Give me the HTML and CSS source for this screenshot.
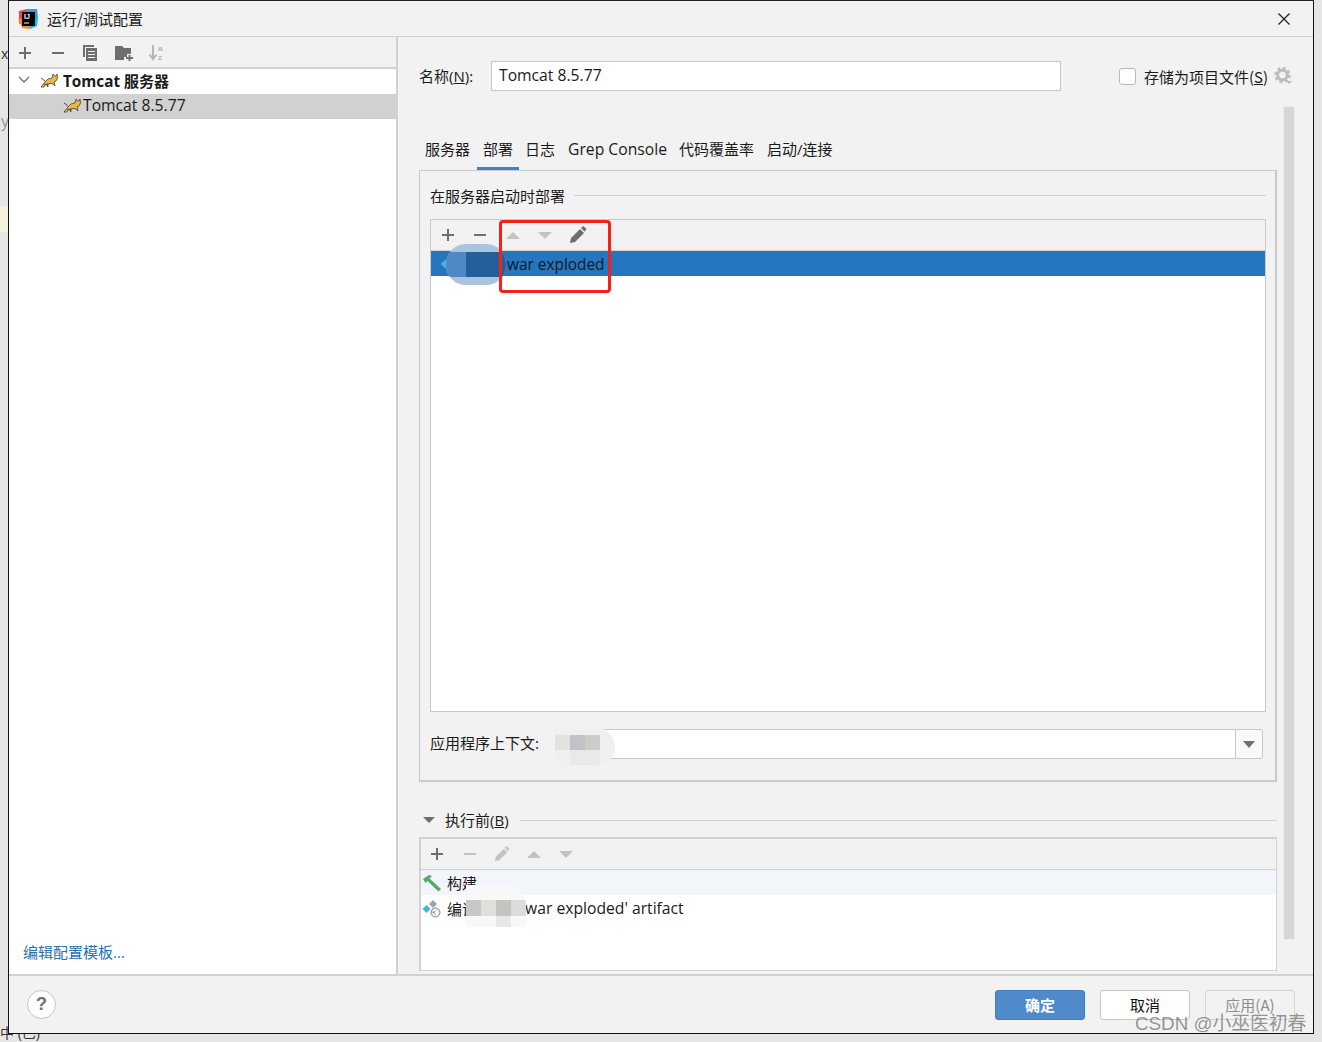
FILE: index.html
```html
<!DOCTYPE html>
<html lang="zh">
<head>
<meta charset="utf-8">
<title>运行/调试配置</title>
<link rel="stylesheet" href="styles.css">
</head>
<body>
<div class="desk">
  <span class="bg-text bg-x">x</span>
  <span class="bg-text bg-y">y</span>
  <span class="bg-note"></span>
  <span class="bg-text bg-zh">中 (已)</span>
  <div class="dialog">
    <header class="titlebar">
      <svg class="logo" width="20" height="20" viewBox="0 0 20 20"><path d="M1 2l8-2 3 3-5 9-6 3z" fill="#fc3a6b"/><path d="M8 0h11l1 10-6 3z" fill="#2f9cf0"/><path d="M0 9l4 10 8 1 1-8z" fill="#fe8a2a"/><path d="M12 20l7-3 1-8-8 2z" fill="#07c3f2"/><rect x="4" y="3" width="13" height="14" fill="#000"/><text x="6" y="10" class="logo-text">IJ</text><rect x="6" y="13.500" width="5" height="1" fill="#fff"/></svg>
      <span class="title">运行/调试配置</span>
      <svg class="close" width="14" height="14" viewBox="0 0 14 14"><path d="M1.500 1.500l11 11M12.500 1.500l-11 11" stroke="#222" stroke-width="1.300" fill="none"/></svg>
    </header>
    <div class="body">
      <aside class="sidebar">
        <div class="side-tools">
          <svg class="ic" viewBox="0 0 16 16"><path d="M8 2v12M2 8h12" stroke="#6e6e6e" stroke-width="2"/></svg>
          <svg class="ic" viewBox="0 0 16 16"><path d="M2 8h12" stroke="#6e6e6e" stroke-width="2"/></svg>
          <svg class="ic ic-copy" viewBox="0 0 16 16"><path d="M1 0h11v2H3v10H1z" fill="#6e6e6e"/><path d="M4 3h11v13H4z" fill="#6e6e6e"/><path d="M6 6h7v1H6zM6 9h7v1H6zM6 12h7v1H6z" fill="#f2f2f2"/></svg>
          <svg class="ic ic-wide" viewBox="0 0 18 16"><path d="M0 1h7l2 2h7v6h-4v3H9v3H0z" fill="#6e6e6e"/><path d="M14.500 10v6M11 13h7" stroke="#6e6e6e" stroke-width="2"/></svg>
          <svg class="ic dim" viewBox="0 0 18 18"><path d="M5 1v13M1.500 10.500L5 15l3.500-4.500" stroke="#b5b5b5" stroke-width="2" fill="none"/><text x="10" y="7" class="az">a</text><text x="10" y="16" class="az">z</text></svg>
        </div>
        <div class="tree-row tree-parent">
          <svg class="chev" width="12" height="8" viewBox="0 0 12 8"><path d="M1 1l5 5 5-5" stroke="#6e6e6e" stroke-width="1.300" fill="none"/></svg>
          <svg class="cat" width="18" height="16" viewBox="0 0 18 16"><use href="#tomcat"/></svg>
          <strong class="tree-strong"><span class="lat">Tomcat</span> 服务器</strong>
        </div>
        <div class="tree-row tree-selected">
          <svg class="cat" width="18" height="16" viewBox="0 0 18 16"><use href="#tomcat"/></svg>
          <span class="lat">Tomcat 8.5.77</span>
        </div>
        <a class="template-link">编辑配置模板...</a>
      </aside>
      <main class="content">
        <div class="name-row">
          <label class="name-label">名称(<u>N</u>):</label>
          <div class="name-input"><span class="lat">Tomcat 8.5.77</span></div>
          <span class="checkbox"></span>
          <span class="store">存储为项目文件(<u>S</u>)</span>
          <svg class="gear" width="18" height="18" viewBox="0 0 18 18"><circle cx="8.500" cy="8" r="4.800" fill="none" stroke="#bcbcbc" stroke-width="3"/><circle cx="8.500" cy="8" r="7" fill="none" stroke="#bcbcbc" stroke-width="2.500" stroke-dasharray="3 2.500"/><path d="M12 14h6l-3 3z" fill="#bcbcbc"/></svg>
        </div>
        <div class="lower">
          <div class="forms">
            <nav class="tabs">
              <span class="tab">服务器</span>
              <span class="tab tab-active">部署</span>
              <span class="tab">日志</span>
              <span class="tab tab-grep"><span class="lat">Grep Console</span></span>
              <span class="tab">代码覆盖率</span>
              <span class="tab">启动/连接</span>
            </nav>
            <section class="tab-panel">
              <div class="legend"><span>在服务器启动时部署</span><i class="rule"></i></div>
              <div class="list-box">
                <div class="list-tools">
                  <svg class="t" viewBox="0 0 16 16"><path d="M8 2v12M2 8h12" stroke="#6e6e6e" stroke-width="2"/></svg>
                  <svg class="t" viewBox="0 0 16 16"><path d="M2 8h12" stroke="#6e6e6e" stroke-width="2"/></svg>
                  <svg class="t t-up" viewBox="0 0 16 16"><path d="M1 12l7-7 7 7z" fill="#c3c3c3"/></svg>
                  <svg class="t" viewBox="0 0 16 16"><path d="M1 5h14l-7 7z" fill="#c3c3c3"/></svg>
                  <svg class="t" viewBox="0 0 18 18"><path d="M1 17l1-5L11 3l4 4-9 9zM12 2l1.500-1.500a1 1 0 0 1 1.400 0l2.100 2.100a1 1 0 0 1 0 1.400L15.500 5.500z" fill="#6e6e6e"/></svg>
                </div>
                <div class="deploy-row"><i class="diamond"></i><span class="deploy-text">war exploded</span></div>
              </div>
              <div class="context-row">
                <label class="context-label">应用程序上下文:</label>
                <div class="combo">
                  <div class="combo-field"></div>
                  <div class="combo-btn"><svg width="12" height="7" viewBox="0 0 12 7"><path d="M0 0h12L6 7z" fill="#6e6e6e"/></svg></div>
                </div>
              </div>
            </section>
            <div class="before-head">
              <svg width="12" height="8" viewBox="0 0 12 8"><path d="M0 1h12L6 7z" fill="#6e6e6e"/></svg>
              <span class="before-title">执行前(<u>B</u>)</span>
              <i class="rule"></i>
            </div>
            <div class="before-box">
              <div class="before-tools">
                <svg class="t" viewBox="0 0 16 16"><path d="M8 2v12M2 8h12" stroke="#6e6e6e" stroke-width="2"/></svg>
                <svg class="t" viewBox="0 0 16 16"><path d="M2 8h12" stroke="#c3c3c3" stroke-width="2"/></svg>
                <svg class="t" viewBox="0 0 18 18"><path d="M1 17l1-5L11 3l4 4-9 9zM12 2l1.500-1.500a1 1 0 0 1 1.400 0l2.100 2.100a1 1 0 0 1 0 1.400L15.500 5.500z" fill="#c3c3c3"/></svg>
                <svg class="t" viewBox="0 0 16 16"><path d="M1 12l7-7 7 7z" fill="#c3c3c3"/></svg>
                <svg class="t" viewBox="0 0 16 16"><path d="M1 5h14l-7 7z" fill="#c3c3c3"/></svg>
              </div>
              <div class="step step-hi">
                <svg class="step-ic" width="20" height="18" viewBox="0 0 20 18"><path d="M1 5l6-4 3 1-2.500 2.500L19 15l-2.500 2.500L5.500 7 3.500 9z" fill="#59a869"/></svg>
                <span class="step-label">构建</span>
              </div>
              <div class="step">
                <svg class="step-ic" width="20" height="18" viewBox="0 0 20 18"><path d="M4.500 5l4 4-4 4-4-4z" fill="#40b6e0"/><path d="M11 0l4 4-4 4-4-4z" fill="#9aa7b0"/><circle cx="13.500" cy="12.500" r="5" fill="#9aa7b0"/><circle cx="13.500" cy="12.500" r="3.500" fill="#fff"/><path d="M16 10l-4 2 2.500 3.500-4.500-3.500z" fill="#6e7b85"/></svg>
                <span class="step-label">编译</span><span class="artifact lat">war exploded' artifact</span>
              </div>
            </div>
          </div>
          <div class="scroll-track"><div class="scroll-thumb"></div></div>
        </div>
      </main>
    </div>
    <footer class="footer">
      <button class="help">?</button>
      <div class="actions">
        <button class="btn btn-primary">确定</button>
        <button class="btn">取消</button>
        <button class="btn btn-off">应用(A)</button>
      </div>
    </footer>
  </div>

  <span class="blur blur-a"><b></b><b></b></span>
  <span class="blur blur-b"><b></b><b></b><b></b><b></b><b></b><b></b></span>
  <span class="blur blur-c"><b></b><b></b><b></b><b></b><b></b><b></b><b></b><b></b></span>
  <span class="redbox"></span>
  <span class="watermark">CSDN @小巫医初春</span>

  <svg class="defs" width="0" height="0"><defs><g id="tomcat"><path d="M1 15l4-5 3-3 4-1 1-4 1.500 2h1.500l1-2 .5 4-1.500 3-2 1 1 4-2-2-3-.5-3 .5 1 3-2-3-2 3z" fill="#e6bb4c" stroke="#4d4228" stroke-width=".8"/><path d="M1 6l4 3M4 12l5 1" stroke="#55503a" stroke-width="1" fill="none"/></g></defs></svg>
</div>
</body>
</html>
```
FILE: styles.css
```css
* { box-sizing: border-box; }
html, body { margin: 0; padding: 0; }
body {
  width: 1322px; height: 1042px; overflow: hidden;
  font-family: "Open Sans", "Noto Sans CJK SC", sans-serif;
  font-size: 15px; color: #1a1a1a;
}
.lat { font-size: 15.700px; }
.desk { position: relative; width: 1322px; height: 1042px; background: #e6e6e6; padding-left: 8px; }
.bg-text { position: absolute; color: #333; font-size: 14px; }
.bg-x { left: 1px; top: 44px; }
.bg-y { left: 1px; top: 110px; color: #8b97a5; font-size: 16px; }
.bg-note { position: absolute; left: 0; top: 206px; width: 8px; height: 26px; background: #f3f1dc; }
.bg-zh { left: 0; top: 1022px; white-space: nowrap; }
.dialog {
  position: relative; width: 1306px; height: 1034px;
  border: 1px solid #111; border-top-color: #222;
  background: #f2f2f2; display: flex; flex-direction: column;
}
.titlebar {
  height: 36px; flex: none; display: flex; align-items: center;
  padding: 1px 22px 0 9px; border-bottom: 1px solid #d1d1d1;
}
.logo { flex: none; }
.logo-text { font: 700 7px "Liberation Sans", sans-serif; fill: #fff; }
.title { margin-left: 9px; font-family: "Noto Sans CJK SC", sans-serif; line-height: 20px; }
.close { margin-left: auto; }
.body { flex: 1; display: flex; min-height: 0; }
.sidebar {
  width: 389px; flex: none; background: #fff; border-right: 2px solid #d1d1d1;
  display: flex; flex-direction: column;
}
.side-tools {
  height: 32px; background: #f2f2f2; border-bottom: 2px solid #d1d1d1;
  display: flex; align-items: center; gap: 17px; padding: 2px 9px 0 8px; flex: none;
}
.ic { width: 16px; height: 16px; flex: none; }
.ic-copy { margin-left: -1px; }
.ic-wide { width: 18px; margin-right: -2px; }
.ic.dim { width: 18px; height: 18px; }
.az { font: 700 8px "Liberation Sans", sans-serif; fill: #b5b5b5; }
.tree-row { height: 25px; display: flex; align-items: center; padding-left: 9px; flex: none; }
.tree-parent { height: 25px; padding-bottom: 3px; }
.chev { margin-right: 10px; }
.cat { flex: none; }
.tree-strong { margin-left: 5px; font-weight: 700; }
.tree-strong .lat { font-size: 15.300px; }
.tree-selected { background: #d1d1d1; padding: 0 0 3px 54px; }
.tree-selected .cat { margin-right: 2px; }
.template-link {
  margin-top: auto; margin-bottom: 12px; margin-left: 14px; color: #2470b3; font-size: 15px; line-height: 20px;
}
.content { flex: 1; min-width: 0; padding: 24px 0 0 21px; display: flex; flex-direction: column; }
.name-row { display: flex; align-items: center; height: 30px; flex: none; }
.name-label { width: 72px; flex: none; padding-bottom: 2px; }
.name-input {
  width: 570px; height: 30px; background: #fff; border: 1px solid #c9c9c9; flex: none;
  padding-left: 7px; line-height: 27px;
}
.checkbox {
  width: 17px; height: 17px; background: #fff; border: 1px solid #b8b8b8; border-radius: 3px;
  margin-left: 58px; flex: none;
}
.store { margin-left: 8px; font-family: "Noto Sans CJK SC", sans-serif; font-size: 15px; white-space: nowrap; }
.gear { margin-left: 6px; flex: none; }
.lower { display: flex; flex: 1; min-height: 0; margin-top: 15px; }
.forms { width: 858px; flex: none; }
.tabs { display: flex; height: 64px; align-items: flex-end; gap: 1px; }
.tab { padding: 0 6px 8px; line-height: 20px; height: 31px; border-bottom: 3px solid transparent; white-space: nowrap; }
.tab-active { border-bottom-color: #4083c9; margin-right: -1px; }
.tab-grep { margin-right: -1px; }
.tab-panel {
  height: 612px; border: 1px solid #c9c9c9; border-bottom-width: 2px; border-right-width: 2px;
  padding: 13px 9px 0 10px; display: flex; flex-direction: column;
}
.legend { display: flex; align-items: center; gap: 9px; height: 22px; flex: none; }
.rule { flex: 1; height: 1px; background: #d1d1d1; display: block; }
.list-box { margin-top: 13px; height: 493px; border: 1px solid #c9c9c9; background: #fff; flex: none; }
.list-tools, .before-tools { background: #f2f2f2; display: flex; align-items: center; border-bottom: 1px solid #d1d1d1; }
.list-tools { padding-left: 9px; gap: 16px; height: 30px; border-bottom: none; }
.t { width: 16px; height: 16px; flex: none; }
.t-up { margin-left: 1px; }
.list-tools .t:last-child { width: 18px; height: 18px; margin-left: 0; }
.deploy-row { height: 26px; background: #2675bf; border-top: 1px solid #d1d1d1; padding-left: 11px; display: flex; align-items: center; }
.diamond { width: 6px; height: 6px; background: #40b6e0; transform: rotate(45deg); margin-right: 59px; flex: none; }
.deploy-text { color: #0e1a27; font-size: 15.400px; padding-top: 1px; }
.context-row { display: flex; align-items: center; margin-top: 17px; height: 30px; flex: none; }
.context-label { width: 125px; flex: none; padding-bottom: 3px; }
.combo { display: flex; width: 659px; height: 30px; margin-left: 49px; flex: none; }
.combo-field { flex: 1; background: #fff; border: 1px solid #c9c9c9; border-right: none; }
.combo-btn { width: 28px; display: flex; align-items: center; justify-content: center; background: #f9f9f9; border: 1px solid #c9c9c9; border-radius: 0 3px 3px 0; }
.before-head { display: flex; align-items: center; height: 22px; margin-top: 27px; padding-left: 4px; }
.before-title { margin-left: 10px; margin-right: 11px; padding-bottom: 2px; }
.before-box { margin-top: 6px; height: 134px; border: 2px solid #d1d1d1; border-bottom-width: 1px; border-right-width: 1px; background: #fff; }
.before-tools { padding-left: 8px; gap: 17px; height: 31px; }
.before-tools .t:nth-child(n+3) { margin-left: -1px; }
.step { height: 25px; display: flex; align-items: center; padding-left: 1px; line-height: 24px; }
.step-hi { background: #f2f5f9; margin-bottom: 1px; }
.step-ic { margin-right: 5px; flex: none; }
.artifact { margin-left: 48px; padding-bottom: 1px; }
.scroll-track { width: 12px; margin-left: 6px; height: 834px; background: #d9d9d9; border: 1px solid #ececec; flex: none; }
.scroll-thumb { height: 100%; background: #d6d6d6; }
.footer { height: 59px; flex: none; border-top: 2px solid #d1d1d1; display: flex; align-items: center; padding: 0 18px 0 18px; }
.help {
  width: 29px; height: 29px; border-radius: 50%; border: 1px solid #c4c4c4; background: #fff;
  color: #6e6e6e; font: 700 18px "Liberation Sans", sans-serif; padding: 0;
}
.actions { margin-left: auto; display: flex; gap: 15px; }
.btn {
  width: 90px; height: 30px; background: #fff; border: 1px solid #c4c4c4; border-radius: 3px; padding: 0;
  font: 15px "Noto Sans CJK SC", sans-serif; color: #111;
}
.btn-primary { background: #4f8bcb; border-color: #3f7fbf; color: #fff; font-weight: 700; }
.btn-off { background: #f2f2f2; color: #8e8e8e; border-color: #d4d4d4; }
.blur { position: absolute; display: grid; overflow: hidden; }
.blur b { display: block; }
.blur-a { left: 446px; top: 244px; width: 60px; height: 41px; border-radius: 20px; background: #a9c4e0; grid-template-columns: 20px 40px; grid-template-rows: 25px; align-content: center; }
.blur-a b { background: #4f88c4; }
.blur-a b + b { background: #225f9c; }
.blur-b { left: 555px; top: 728px; width: 60px; height: 38px; border-radius: 0 20px 20px 0; background: #f0f0f0; padding-top: 7px; grid-template-columns: 15px 15px 15px; grid-template-rows: 15px 15px; }
.blur-b b:nth-child(1) { background: #e3e2df; }
.blur-b b:nth-child(2) { background: #c0c4c8; }
.blur-b b:nth-child(3) { background: #cdccc8; }
.blur-b b:nth-child(5), .blur-b b:nth-child(6) { background: #e9e9e9; }
.blur-c { left: 466px; top: 885px; width: 60px; height: 42px; border-radius: 0 20px 0 0; background: #f8f8f8; padding-top: 15px; grid-template-columns: 15px 15px 15px 15px; grid-template-rows: 16px 11px; }
.blur-c b:nth-child(1) { background: #c9c8c8; }
.blur-c b:nth-child(2) { background: #e0dfdc; }
.blur-c b:nth-child(3) { background: #c6c4c0; }
.blur-c b:nth-child(4) { background: #dcdcda; }
.blur-c b:nth-child(7) { background: #e8e8e8; }
.redbox { position: absolute; left: 499px; top: 220px; width: 112px; height: 73px; border: 3px solid #f4211b; border-radius: 4px; }
.watermark { position: absolute; left: 1135px; top: 1012px; font: 18.800px/24px "Liberation Sans", "Noto Sans CJK SC", sans-serif; color: rgba(110,110,110,.72); white-space: nowrap; }
.defs { position: absolute; }
```
